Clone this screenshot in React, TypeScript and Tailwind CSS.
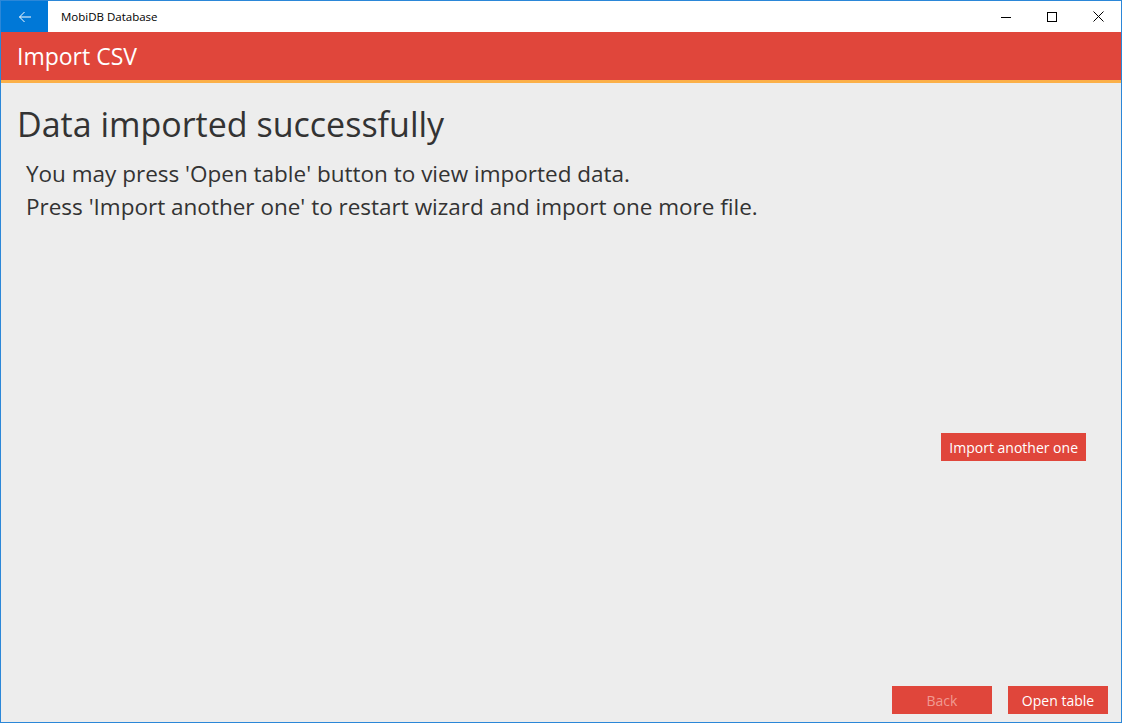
import React from "react";

const font = { fontFamily: "'Segoe UI', 'Open Sans', 'Noto Sans', sans-serif" };

export default function App() {
  return (
    <div
      className="w-[1122px] h-[723px] flex flex-col border border-[#2b87d8] bg-[#ededed] overflow-hidden"
      style={font}
    >
      {/* title bar */}
      <div className="h-[31px] flex items-stretch bg-white shrink-0">
        <div className="w-[47px] bg-[#0078d7] flex items-center justify-center">
          <svg width="14" height="12" viewBox="0 0 14 12" fill="none" stroke="white" strokeWidth="1">
            <path d="M13 6H1.5M6.5 1L1.5 6l5 5" />
          </svg>
        </div>
        <div className="flex-1 flex items-center pl-[13px] text-[11.5px] text-black">MobiDB Database</div>
        <div className="flex items-stretch">
          <div className="w-[46px] flex items-center justify-center">
            <svg width="10" height="10" viewBox="0 0 10 10" stroke="black" strokeWidth="1">
              <path d="M0 5.5h10" />
            </svg>
          </div>
          <div className="w-[46px] flex items-center justify-center">
            <svg width="10" height="10" viewBox="0 0 10 10" fill="none" stroke="black" strokeWidth="1">
              <rect x="0.5" y="0.5" width="9" height="9" />
            </svg>
          </div>
          <div className="w-[46px] flex items-center justify-center">
            <svg width="11" height="11" viewBox="0 0 11 11" stroke="black" strokeWidth="1">
              <path d="M0.5 0.5l10 10M10.5 0.5l-10 10" />
            </svg>
          </div>
        </div>
      </div>

      {/* header */}
      <div className="h-[51px] shrink-0 bg-[#e0463b] border-b-[3px] border-[#fbb049] flex items-center pl-[16px]">
        <span className="text-white text-[23px]">Import CSV</span>
      </div>

      {/* content */}
      <div className="flex-1 flex flex-col px-[16px]">
        <h1 className="text-[34px] text-[#333] mt-[18px] leading-[46px]">Data imported successfully</h1>
        <div className="pl-[9px] mt-[10px] text-[22.5px] text-[#333] leading-[33px]">
          <p>You may press 'Open table' button to view imported data.</p>
          <p>Press 'Import another one' to restart wizard and import one more file.</p>
        </div>
        <div className="flex justify-end mt-[210px] pr-[19px]">
          <button className="h-[28px] px-[8px] bg-[#e0463b] text-white text-[14px]">Import another one</button>
        </div>
        <div className="flex-1" />
        <div className="flex justify-end gap-[16px] pb-[8px] mr-[-3px]">
          <button className="w-[100px] h-[28px] bg-[#e0463b] text-[#f09a92] text-[14px]">Back</button>
          <button className="w-[100px] h-[28px] bg-[#e0463b] text-white text-[14px]">Open table</button>
        </div>
      </div>
    </div>
  );
}
